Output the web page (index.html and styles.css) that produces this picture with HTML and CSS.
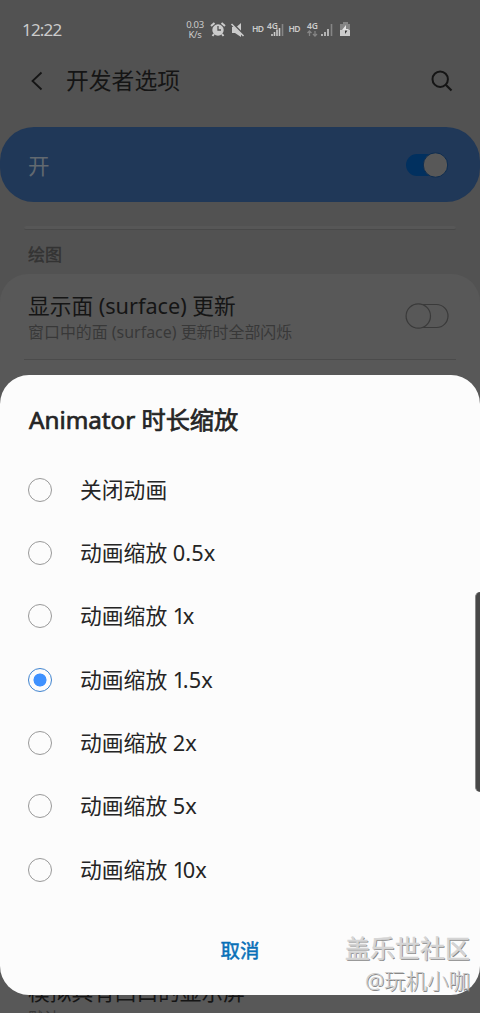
FILE: index.html
```html
<!DOCTYPE html>
<html lang="zh-CN">
<head>
<meta charset="utf-8">
<title>开发者选项</title>
<link rel="stylesheet" href="styles.css">
</head>
<body>
<div class="screen">
  <header class="status">
    <span class="clock">12:22</span>
    <span class="speed"><span>0.03</span><span>K/s</span></span>
    <svg class="status-icons" width="144" height="20" viewBox="0 0 144 20">
      <g fill="#cbcbcb">
        <circle cx="8" cy="10" r="5.7"/>
        <path d="M1 6 4.5 3M15 6 11.5 3M4 14 2.5 16M12 14l1.500 2" stroke="#cbcbcb" stroke-width="2"/>
        <path d="M8 6v4h3" fill="none" stroke="#525252" stroke-width="1.300"/>
        <path d="M22 7v6h3l6 4V3l-4 3.500z"/>
        <path d="M21.500 2.500 34 15" stroke="#525252" stroke-width="2"/>
        <path d="M21.500 4 33.500 16" stroke="#cbcbcb" stroke-width="1.600"/>
      </g>
      <g class="signal-text">
        <text x="42" y="12" textLength="12">HD</text>
        <text x="57" y="9" textLength="11">4G</text>
        <text x="78.500" y="12" textLength="12">HD</text>
        <text x="97" y="9" textLength="11">4G</text>
      </g>
      <path d="M62 16v-2M64.500 16v-4M67 16V9.500M69.500 16V8M112 16v-2M115 16v-4M118 16V9" stroke="#cbcbcb" stroke-width="1.600"/>
      <path d="M72.500 16V4M121.500 16V4" stroke="#858585" stroke-width="1.600"/>
      <path d="M99.500 16v-5M97.500 13l2-2 2 2M105 11v5M103 14l2 2 2-2" fill="none" stroke="#858585" stroke-width="1.300"/>
      <path d="M130 4h3V2h5v2h2v6h-10z" fill="#858585"/>
      <path d="M130 10h10v6h-10z" fill="#cbcbcb"/>
      <path d="M136 5 132 10h3v3l4-4h-3z" fill="#e5e5e5"/>
      <path d="M135 14v-3.500h2.500z" fill="#333"/>
    </svg>
  </header>

  <div class="appbar">
    <svg width="14" height="20" viewBox="0 0 14 20"><path d="M11.500 1.500 2.500 10l9 8.500" fill="none" stroke="#151515" stroke-width="1.800"/></svg>
    <h1>开发者选项</h1>
    <svg class="search" width="22" height="22" viewBox="0 0 22 22"><circle cx="9.200" cy="9.200" r="7.700" fill="none" stroke="#151515" stroke-width="2"/><path d="m14.500 14.500 6 6" stroke="#151515" stroke-width="2.200"/></svg>
  </div>

  <div class="master">
    <span>开</span>
    <svg width="44" height="26" viewBox="0 0 44 26"><rect x="1" y="2" width="42" height="22" rx="11" fill="#01305f"/><circle cx="30.500" cy="13" r="12.200" fill="#585858" stroke="#0d2c50"/></svg>
  </div>

  <div class="divider"></div>
  <div class="section">绘图</div>
  <main class="card">
    <div class="setting">
      <div>
        <div class="name">显示面 (surface) 更新</div>
        <div class="hint">窗口中的面 (surface) 更新时全部闪烁</div>
      </div>
      <svg width="44" height="26" viewBox="0 0 44 26" fill="#585858" stroke="#3a3a3a" stroke-width="1.200"><rect x="5" y="1.500" width="38" height="23" rx="11.500"/><circle cx="13.300" cy="13" r="12.200"/></svg>
    </div>
    <div class="below">
      <div class="name">模拟具有凹口的显示屏</div>
      <div class="hint">默认</div>
    </div>
  </main>

  <section class="dialog">
    <h2>Animator 时长缩放</h2>
    <div class="options">
      <div class="option"><i class="radio"></i><span>关闭动画</span></div>
      <div class="option"><i class="radio"></i><span>动画缩放 0.5x</span></div>
      <div class="option"><i class="radio"></i><span>动画缩放 <b>1</b>x</span></div>
      <div class="option"><i class="radio checked"></i><span>动画缩放 <b>1</b>.5x</span></div>
      <div class="option"><i class="radio"></i><span>动画缩放 2x</span></div>
      <div class="option"><i class="radio"></i><span>动画缩放 5x</span></div>
      <div class="option"><i class="radio"></i><span>动画缩放 <b>1</b>0x</span></div>
    </div>
    <div class="cancel">取消</div>
  </section>
  <div class="edge-handle"></div>
  <div class="watermark"><div class="community">盖乐世社区</div><div class="author">@玩机小咖</div></div>
</div>
</body>
</html>
```
FILE: styles.css
```css
* { box-sizing: border-box; }
body { margin: 0; }
.screen {
  position: relative;
  width: 480px;
  height: 1013px;
  overflow: hidden;
  display: flex;
  flex-direction: column;
  background: #525252;
  color: #151515;
  font-family: "Noto Sans", "Noto Sans CJK SC", sans-serif;
}
.screen > * { flex-shrink: 0; }
.status { display: flex; height: 56px; padding-left: 22px; align-items: flex-start; color: #cbcbcb; }
.clock { width: 163px; padding-top: 18px; font-size: 17px; line-height: 24px; letter-spacing: -0.8px; }
.speed { display: flex; flex-direction: column; width: 20px; margin-right: 5px; padding-top: 20px; align-items: center; font-size: 9.500px; line-height: 9.500px; letter-spacing: -0.300px; }
.status-icons { margin-top: 20px; }
.signal-text { fill: #cbcbcb; font-size: 8.500px; font-weight: 600; }
.appbar { display: flex; height: 50px; align-items: center; padding: 0 27px 0 30px; }
h1 { margin: 0 0 0 22px; font-size: 22.800px; line-height: 30px; font-weight: 400; }
.search { margin-left: auto; }
.master {
  display: flex;
  height: 75px;
  margin-top: 21px;
  padding: 0 31px 0 28px;
  align-items: center;
  justify-content: space-between;
  border-radius: 34px;
  background: #203858;
  color: #626970;
  font-size: 21.500px;
}
.divider { height: 4px; margin: 24px 24px 0; background: #575757; border-bottom: 1px solid #494949; border-radius: 3px; }
.section { height: 44px; padding: 12px 28px 0; font-size: 17px; line-height: 25px; color: #333; -webkit-text-stroke: 0.400px #333; }
.card { flex: 1 0 auto; border-radius: 28px 28px 0 0; background: #585858; }
.setting { display: flex; height: 86px; margin: 0 24px; padding: 17px 7px 0 4px; justify-content: space-between; border-bottom: 1px solid #4b4b4b; }
.setting svg { margin-top: 12px; }
.name { font-size: 21.700px; line-height: 30px; }
.hint { margin-top: -1px; font-size: 15.950px; line-height: 24px; color: #383838; }
.below { padding: 617px 28px 0; }
.dialog {
  position: absolute;
  top: 375px;
  left: 0;
  width: 480px;
  height: 620px;
  border-radius: 29px;
  background: #fcfcfc;
  color: #252525;
}
h2 { margin: 0; padding: 27px 29px 0; font-size: 24.200px; line-height: 36px; font-weight: 400; -webkit-text-stroke: 0.700px #252525; }
.options { display: grid; grid-auto-rows: 63.330px; padding: 20px 28px 0; }
.option { display: flex; align-items: center; gap: 28px; font-size: 21.800px; line-height: 30px; }
.option b { font-weight: 400; letter-spacing: -2.500px; }
.radio { width: 24px; height: 24px; border: 1px solid #999; border-radius: 50%; }
.radio.checked { border-color: #3f83cf; background: radial-gradient(circle, #3e91ff 6.200px, transparent 6.800px); }
.cancel { padding-top: 35px; text-align: center; font-size: 19.500px; line-height: 30px; color: #0870b8; -webkit-text-stroke: 0.500px #0870b8; }
.edge-handle { position: absolute; right: 0; top: 592px; width: 5px; height: 200px; border-radius: 5px 0 0 5px; border-left: 1px solid #888; background: #484848; }
.watermark { position: absolute; right: 10px; bottom: 17px; text-align: right; color: #d5d5d5; text-shadow: 1px 1px #888; }
.community { font-size: 25px; line-height: 36px; -webkit-text-stroke: 0.500px #d5d5d5; }
.author { font-size: 21.500px; line-height: 30px; font-weight: 300; color: #ccc; }
```
